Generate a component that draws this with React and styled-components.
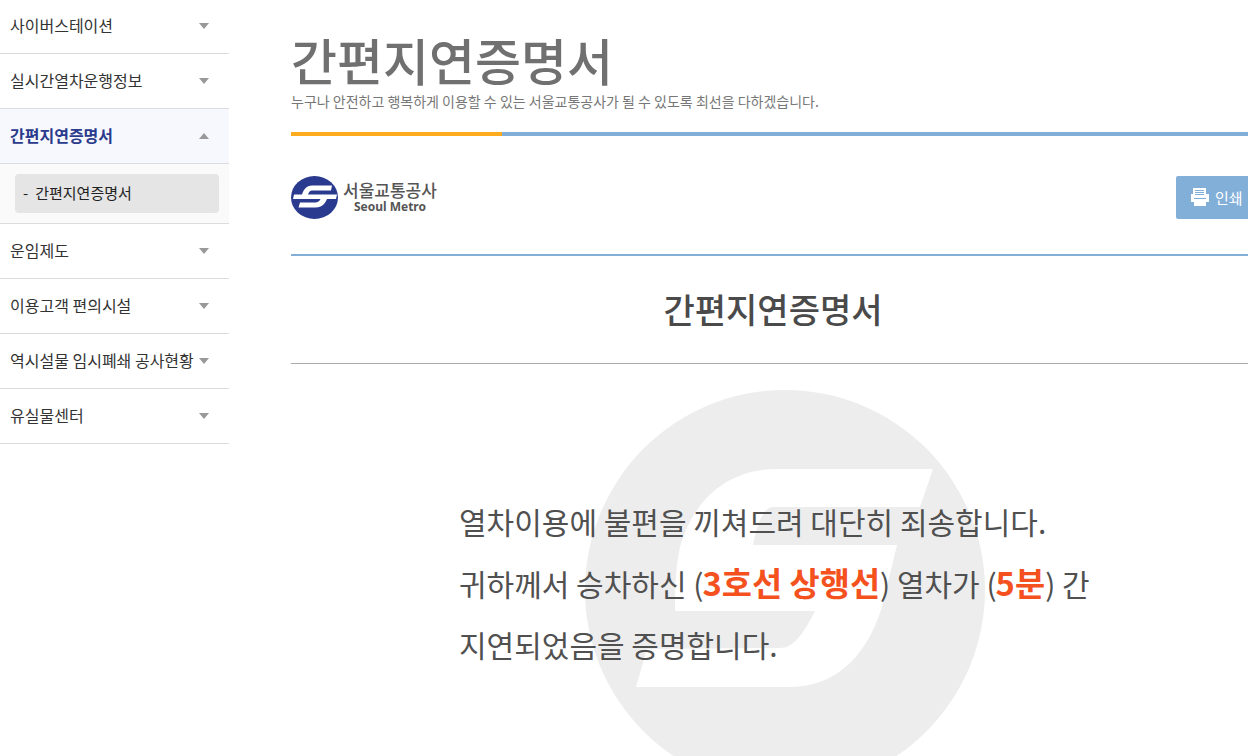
import React from 'react'
import styled, { createGlobalStyle } from 'styled-components'

const GlobalStyle = createGlobalStyle`
  html, body {
    margin: 0;
    padding: 0;
    background: #fff;
    overflow: hidden;
  }
  body {
    font-family: "Noto Sans CJK KR", "Noto Sans", sans-serif;
    color: #333;
  }
`

const Page = styled.div`
  display: flex;
  align-items: flex-start;
  width: 1248px;
  height: 756px;
  overflow: hidden;
`

const Sidebar = styled.nav`
  flex: 0 0 229px;
`

const MenuRow = styled.div`
  display: flex;
  align-items: center;
  justify-content: space-between;
  box-sizing: border-box;
  height: 55px;
  padding: 0 20px 3px 10px;
  border-bottom: 1px solid #dcdcdc;
  font-size: 16px;
  white-space: nowrap;
  color: ${p => (p.$active ? '#2a3a8c' : '#333')};
  font-weight: ${p => (p.$active ? 700 : 400)};
  background: ${p => (p.$active ? '#f7f8fd' : '#fff')};
  &:first-child {
    height: 54px;
  }
`

const Arrow = styled.span`
  flex: none;
  width: 0;
  height: 0;
  margin-top: 2px;
  border-left: 5px solid transparent;
  border-right: 5px solid transparent;
  border-top: ${p => (p.$up ? '0' : '6px solid #999')};
  border-bottom: ${p => (p.$up ? '6px solid #999' : '0')};
`

const SubMenu = styled.div`
  box-sizing: border-box;
  height: 60px;
  padding: 10px 10px 10px 15px;
  background: #fafafa;
  border-bottom: 1px solid #dcdcdc;
`

const SubItem = styled.div`
  display: flex;
  align-items: center;
  gap: 7px;
  height: 39px;
  padding: 0 0 3px 8px;
  box-sizing: border-box;
  border-radius: 4px;
  background: #e5e5e5;
  font-size: 15px;
  color: #222;
`

const Main = styled.main`
  flex: 0 0 964px;
  margin-left: 62px;
`

const PageHead = styled.header`
  padding-top: 26px;
`

const PageTitle = styled.h1`
  margin: 0;
  font-size: 50px;
  line-height: 66px;
  font-weight: 500;
  color: #707070;
`

const PageSub = styled.p`
  margin: 0;
  font-size: 14px;
  line-height: 18px;
  color: #777;
`

const TwoToneBar = styled.div`
  display: flex;
  height: 4px;
  margin-top: 22px;
  background: #82afd8;
`

const BarAccent = styled.div`
  width: 211px;
  background: #ffab1f;
`

const DocTop = styled.div`
  display: flex;
  align-items: center;
  justify-content: space-between;
  height: 114px;
  padding-top: 4px;
  border-bottom: 2px solid #82afd8;
`

const Logo = styled.div`
  display: flex;
  align-items: center;
  gap: 5px;
`

const LogoText = styled.div`
  display: flex;
  flex-direction: column;
  align-items: center;
  color: #555;
`

const LogoKo = styled.span`
  font-size: 17px;
  line-height: 18px;
  font-weight: 500;
`

const LogoEn = styled.span`
  font-family: "Noto Sans", sans-serif;
  font-size: 12px;
  line-height: 15px;
  font-weight: 700;
`

const PrintButton = styled.button`
  display: flex;
  align-items: center;
  gap: 6px;
  box-sizing: border-box;
  width: 79px;
  height: 43px;
  padding: 0 0 0 15px;
  border: 0;
  border-radius: 2px;
  background: #82afd8;
  color: #fff;
  font-family: inherit;
  font-size: 15px;
`

const DocTitle = styled.h2`
  margin: 0;
  height: 107px;
  border-bottom: 1px solid #aaa;
  font-size: 34px;
  line-height: 106px;
  font-weight: 500;
  text-align: center;
  color: #4a4a4a;
`

const DocBody = styled.section`
  position: relative;
  height: 392px;
`

const Watermark = styled.svg`
  position: absolute;
  left: 294px;
  top: 26px;
  width: 400px;
  height: 400px;
`

const Message = styled.div`
  position: relative;
  width: 640px;
  padding: 127px 0 0 168px;
  font-size: 30px;
  line-height: 61.5px;
  word-break: keep-all;
  color: #505050;
`

const Hot = styled.strong`
  color: #f4511e;
  font-size: 32.8px;
  line-height: 1;
  font-weight: 700;
  margin-left: -1px;
`

const menuTop = ['사이버스테이션', '실시간열차운행정보']
const menuBottom = ['운임제도', '이용고객 편의시설', '역시설물 임시폐쇄 공사현황', '유실물센터']

const MetroLogo = () => (
  <svg width="47" height="43" viewBox="0 0 47 43">
    <ellipse cx="23.5" cy="21.5" rx="23.5" ry="21.5" fill="#2a3a8f" />
    <path
      d="M41 9.5 H21 C15.5 9.5 12.5 13.5 11 18.5 H3 L2 23 H29.5 C28.5 25 27 26.5 24 26.5 H9 L7.5 31.5 H25 C31 31.5 34 27.5 36 23 H45 L46 18.5 H17 C18 16 19 14.5 21 14.5 H40 Z"
      fill="#fff"
    />
  </svg>
)

const PrintIcon = () => (
  <svg width="18" height="18" viewBox="6 7 18 18">
    <path d="M8 7 H21 V13 H24 V21 H21 V17 H9 V21 H6 V13 H8 Z" fill="#fff" />
    <path d="M10 9.5 H19 M10 11.5 H19 M10 13.5 H19" stroke="#82afd8" strokeWidth="1" />
    <rect x="9" y="18" width="12" height="7" fill="#fff" />
  </svg>
)

export default function App() {
  return (
    <Page>
      <GlobalStyle />
      <Sidebar>
        {menuTop.map(label => (
          <MenuRow key={label}>
            {label}
            <Arrow />
          </MenuRow>
        ))}
        <MenuRow $active>
          간편지연증명서
          <Arrow $up />
        </MenuRow>
        <SubMenu>
          <SubItem>
            <span>-</span>
            간편지연증명서
          </SubItem>
        </SubMenu>
        {menuBottom.map(label => (
          <MenuRow key={label}>
            {label}
            <Arrow />
          </MenuRow>
        ))}
      </Sidebar>
      <Main>
        <PageHead>
          <PageTitle>간편지연증명서</PageTitle>
          <PageSub>누구나 안전하고 행복하게 이용할 수 있는 서울교통공사가 될 수 있도록 최선을 다하겠습니다.</PageSub>
          <TwoToneBar>
            <BarAccent />
          </TwoToneBar>
        </PageHead>
        <DocTop>
          <Logo>
            <MetroLogo />
            <LogoText>
              <LogoKo>서울교통공사</LogoKo>
              <LogoEn>Seoul Metro</LogoEn>
            </LogoText>
          </Logo>
          <PrintButton>
            <PrintIcon />
            인쇄
          </PrintButton>
        </DocTop>
        <DocTitle>간편지연증명서</DocTitle>
        <DocBody>
          <Watermark viewBox="0 0 400 400">
            <circle cx="200" cy="200" r="200" fill="#ededed" />
            <path
              d="M348 79 L192 79 C140 79 108 112 95 157 C90 180 90 205 90 221 L230 221 C218 245 208 258 195 258 L62 259 L51 297 L205 297 C255 297 285 260 298 213 L312 155 L168 155 C172 135 178 117 188 117 L335 117 Z"
              fill="#fff"
            />
          </Watermark>
          <Message>
            열차이용에 불편을 끼쳐드려 대단히 죄송합니다.
            <br />
            귀하께서 승차하신 (<Hot>3호선 상행선</Hot>) 열차가 (<Hot>5분</Hot>) 간 지연되었음을 증명합니다.
          </Message>
        </DocBody>
      </Main>
    </Page>
  )
}
